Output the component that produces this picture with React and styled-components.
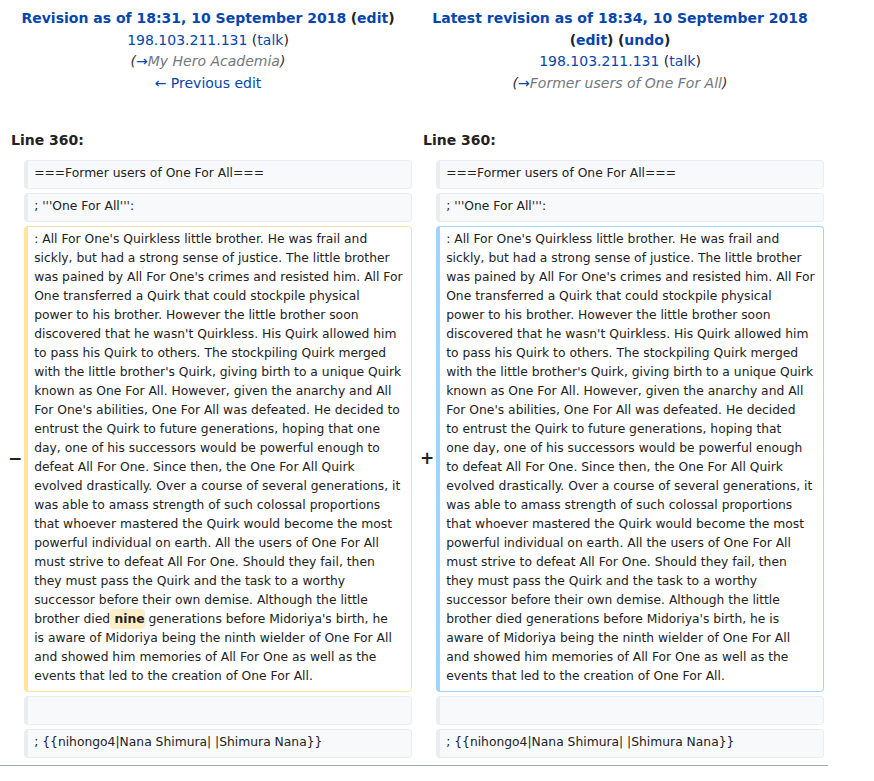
import React from "react";
import styled, { createGlobalStyle } from "styled-components";

const GlobalStyle = createGlobalStyle`
  html, body { margin: 0; padding: 0; background: #fff; }
  body {
    font-family: "DejaVu Sans", "Noto Sans", sans-serif;
    color: #222;
  }
`;

const Page = styled.div`
  width: 828px;
  font-size: 14px;
  line-height: 21.7px;
`;

const DiffGrid = styled.div`
  display: grid;
  grid-template-columns: 2fr 48fr 2fr 48fr;
  gap: 4px;
  padding: 4px;
`;

const HeaderCell = styled.div`
  grid-column: span 2;
  text-align: center;
  padding-top: 4px;
`;

const HeaderLine = styled.div`
  white-space: nowrap;
`;

const Link = styled.a`
  color: #0645ad;
  text-decoration: none;
  font-weight: ${(p) => (p.$bold ? "bold" : "inherit")};
  cursor: pointer;
`;

const Bold = styled.span`
  font-weight: bold;
  color: #222;
`;

const Comment = styled.span`
  font-style: italic;
  color: #333;
`;

const AutoComment = styled.span`
  color: #72777d;
`;

const LineNo = styled.div`
  grid-column: span 2;
  font-weight: bold;
  padding: 31px 7px 4px;
`;

const Marker = styled.div`
  align-self: center;
  text-align: right;
  font-weight: bold;
  font-size: 17px;
  line-height: 1.2;
  color: #222;
  margin-right: -2px;
`;

const borderColors = {
  context: "#eaecf0",
  deleted: "#ffe49c",
  added: "#a3d3ff",
};

const Box = styled.div`
  box-sizing: border-box;
  min-height: 29px;
  font-size: 12.32px;
  line-height: 19px;
  padding: 3px 6px 5px;
  border-style: solid;
  border-width: 1px 1px 1px 4px;
  border-radius: 4px;
  border-color: ${(p) => borderColors[p.$kind]};
  background: ${(p) => (p.$kind === "context" ? "#f8f9fa" : "#fff")};
  color: #222;
`;

const TextLine = styled.div`
  white-space: pre;
`;

const Change = styled.span`
  font-weight: bold;
  background: #feeec8;
  border-radius: 4px;
  padding: 3px 0;
`;

const Divider = styled.div`
  height: 1px;
  background: #a2a9b1;
  margin-top: 3px;
`;

const leftLines = [
  ": All For One's Quirkless little brother. He was frail and",
  "sickly, but had a strong sense of justice. The little brother",
  "was pained by All For One's crimes and resisted him. All For",
  "One transferred a Quirk that could stockpile physical",
  "power to his brother. However the little brother soon",
  "discovered that he wasn't Quirkless. His Quirk allowed him",
  "to pass his Quirk to others. The stockpiling Quirk merged",
  "with the little brother's Quirk, giving birth to a unique Quirk",
  "known as One For All. However, given the anarchy and All",
  "For One's abilities, One For All was defeated. He decided to",
  "entrust the Quirk to future generations, hoping that one",
  "day, one of his successors would be powerful enough to",
  "defeat All For One. Since then, the One For All Quirk",
  "evolved drastically. Over a course of several generations, it",
  "was able to amass strength of such colossal proportions",
  "that whoever mastered the Quirk would become the most",
  "powerful individual on earth. All the users of One For All",
  "must strive to defeat All For One. Should they fail, then",
  "they must pass the Quirk and the task to a worthy",
  "successor before their own demise. Although the little",
  "__NINE__",
  "is aware of Midoriya being the ninth wielder of One For All",
  "and showed him memories of All For One as well as the",
  "events that led to the creation of One For All.",
];

const rightLines = [
  ": All For One's Quirkless little brother. He was frail and",
  "sickly, but had a strong sense of justice. The little brother",
  "was pained by All For One's crimes and resisted him. All For",
  "One transferred a Quirk that could stockpile physical",
  "power to his brother. However the little brother soon",
  "discovered that he wasn't Quirkless. His Quirk allowed him",
  "to pass his Quirk to others. The stockpiling Quirk merged",
  "with the little brother's Quirk, giving birth to a unique Quirk",
  "known as One For All. However, given the anarchy and All",
  "For One's abilities, One For All was defeated. He decided",
  "to entrust the Quirk to future generations, hoping that",
  "one day, one of his successors would be powerful enough",
  "to defeat All For One. Since then, the One For All Quirk",
  "evolved drastically. Over a course of several generations, it",
  "was able to amass strength of such colossal proportions",
  "that whoever mastered the Quirk would become the most",
  "powerful individual on earth. All the users of One For All",
  "must strive to defeat All For One. Should they fail, then",
  "they must pass the Quirk and the task to a worthy",
  "successor before their own demise. Although the little",
  "brother died generations before Midoriya's birth, he is",
  "aware of Midoriya being the ninth wielder of One For All",
  "and showed him memories of All For One as well as the",
  "events that led to the creation of One For All.",
];

function Lines({ lines }) {
  return lines.map((l, i) =>
    l === "__NINE__" ? (
      <TextLine key={i}>
        brother died<Change> nine</Change> generations before Midoriya's birth, he
      </TextLine>
    ) : (
      <TextLine key={i}>{l}</TextLine>
    )
  );
}

function Paren({ children, bold }) {
  const Wrap = bold ? Bold : React.Fragment;
  return <Wrap>({children})</Wrap>;
}

function ContextRow({ text }) {
  return (
    <>
      <Marker />
      <Box $kind="context">{text && <TextLine>{text}</TextLine>}</Box>
      <Marker />
      <Box $kind="context">{text && <TextLine>{text}</TextLine>}</Box>
    </>
  );
}

export default function App() {
  return (
    <Page>
      <GlobalStyle />
      <DiffGrid>
        <HeaderCell>
          <HeaderLine>
            <Link $bold>Revision as of 18:31, 10 September 2018</Link>{" "}
            <Paren bold>
              <Link $bold>edit</Link>
            </Paren>
          </HeaderLine>
          <HeaderLine>
            <Link>198.103.211.131</Link>{" "}
            <Paren>
              <Link>talk</Link>
            </Paren>
          </HeaderLine>
          <HeaderLine>
            <Comment>
              (<Link>→</Link>
              <AutoComment>My Hero Academia</AutoComment>)
            </Comment>
          </HeaderLine>
          <HeaderLine>
            <Link>← Previous edit</Link>
          </HeaderLine>
        </HeaderCell>
        <HeaderCell>
          <HeaderLine>
            <Link $bold>Latest revision as of 18:34, 10 September 2018</Link>
          </HeaderLine>
          <HeaderLine>
            <Paren bold>
              <Link $bold>edit</Link>
            </Paren>{" "}
            <Paren bold>
              <Link $bold>undo</Link>
            </Paren>
          </HeaderLine>
          <HeaderLine>
            <Link>198.103.211.131</Link>{" "}
            <Paren>
              <Link>talk</Link>
            </Paren>
          </HeaderLine>
          <HeaderLine>
            <Comment>
              (<Link>→</Link>
              <AutoComment>Former users of One For All</AutoComment>)
            </Comment>
          </HeaderLine>
        </HeaderCell>

        <LineNo>Line 360:</LineNo>
        <LineNo>Line 360:</LineNo>

        <ContextRow text="===Former users of One For All===" />
        <ContextRow text="; '''One For All''':" />

        <Marker>−</Marker>
        <Box $kind="deleted">
          <Lines lines={leftLines} />
        </Box>
        <Marker>+</Marker>
        <Box $kind="added">
          <Lines lines={rightLines} />
        </Box>

        <ContextRow text="" />
        <ContextRow text="; {{nihongo4|Nana Shimura| |Shimura Nana}}" />
      </DiffGrid>
      <Divider />
    </Page>
  );
}
